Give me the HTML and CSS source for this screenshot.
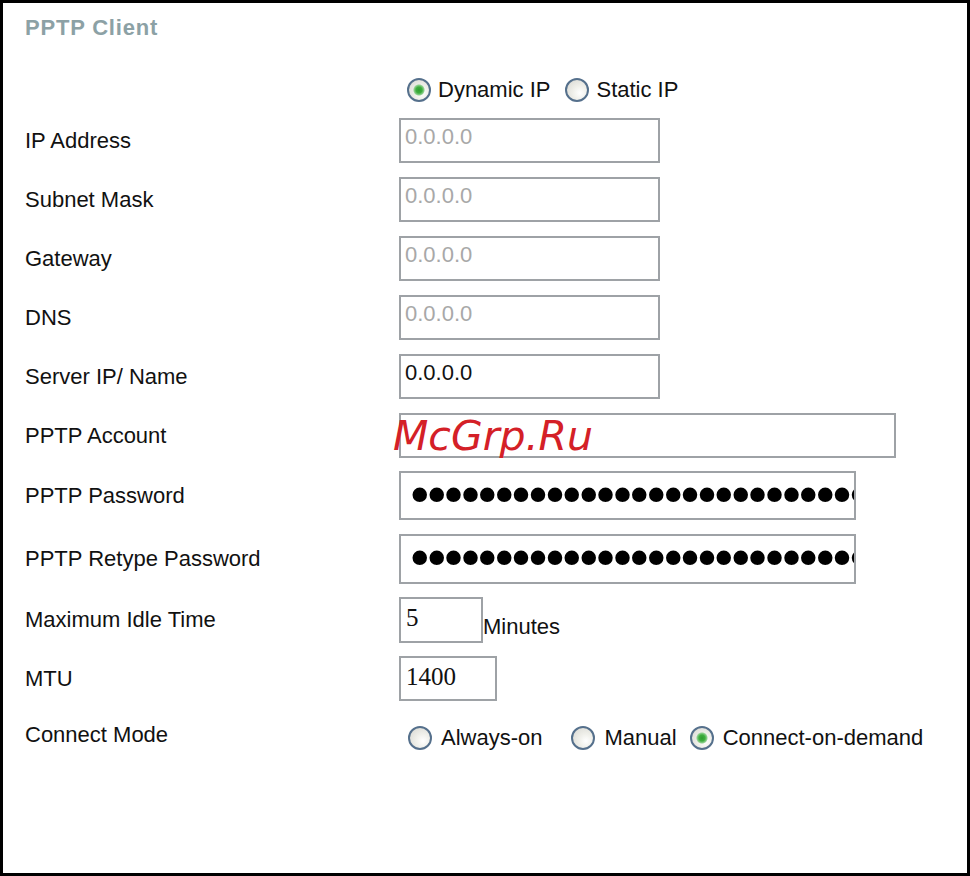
FILE: index.html
```html
<!DOCTYPE html>
<html lang="en">
<head>
<meta charset="utf-8">
<title>PPTP Client</title>
<link rel="stylesheet" href="styles.css">
</head>
<body>
<div class="frame">
  <h1 class="title">PPTP Client</h1>

  <div class="row row-top">
    <div class="label"></div>
    <div class="radios radios-ip">
      <label class="opt"><input type="radio" name="iptype" checked><span>Dynamic IP</span></label>
      <label class="opt"><input type="radio" name="iptype"><span>Static IP</span></label>
    </div>
  </div>

  <div class="row row-ip">
    <div class="label">IP Address</div>
    <input class="field w-ip" type="text" value="0.0.0.0" disabled>
  </div>
  <div class="row">
    <div class="label">Subnet Mask</div>
    <input class="field w-ip" type="text" value="0.0.0.0" disabled>
  </div>
  <div class="row">
    <div class="label">Gateway</div>
    <input class="field w-ip" type="text" value="0.0.0.0" disabled>
  </div>
  <div class="row">
    <div class="label">DNS</div>
    <input class="field w-ip" type="text" value="0.0.0.0" disabled>
  </div>
  <div class="row">
    <div class="label">Server IP/ Name</div>
    <input class="field w-ip" type="text" value="0.0.0.0">
  </div>
  <div class="row">
    <div class="label">PPTP Account</div>
    <input class="field w-account" type="text" value="">
  </div>
  <div class="row row-pass">
    <div class="label">PPTP Password</div>
    <input class="field pass" type="password" value="passwordpasswordpasswordpasswordpassword">
  </div>
  <div class="row row-retype">
    <div class="label">PPTP Retype Password</div>
    <input class="field pass pass2" type="password" value="passwordpasswordpasswordpasswordpassword">
  </div>
  <div class="row row-idle">
    <div class="label">Maximum Idle Time</div>
    <input class="field serif w-idle" type="text" value="5">
    <span class="unit">Minutes</span>
  </div>
  <div class="row row-mtu">
    <div class="label">MTU</div>
    <input class="field serif w-mtu" type="text" value="1400">
  </div>
  <div class="row row-mode">
    <div class="label label-mode">Connect Mode</div>
    <div class="radios radios-mode">
      <label class="opt opt-always"><input type="radio" name="mode"><span>Always-on</span></label>
      <label class="opt opt-manual"><input type="radio" name="mode"><span>Manual</span></label>
      <label class="opt"><input type="radio" name="mode" checked><span>Connect-on-demand</span></label>
    </div>
  </div>

  <div class="watermark">McGrp.Ru</div>
</div>
</body>
</html>
```

FILE: styles.css
```css
html, body {
  margin: 0;
  padding: 0;
  background: #fff;
}

.frame {
  position: relative;
  width: 970px;
  height: 876px;
  box-sizing: border-box;
  border: 3px solid #000;
  padding: 12px 0 0 22px;
  font-family: "Liberation Sans", Arial, sans-serif;
  font-size: 22px;
  line-height: 26px;
  color: #111;
  background: #fff;
}

.title {
  margin: 0;
  font-size: 22px;
  line-height: 26px;
  font-weight: bold;
  letter-spacing: 0.8px;
  color: #8ca1a5;
}

.row {
  display: flex;
  align-items: center;
  margin-top: 14px;
}

.label {
  width: 374px;
  flex: none;
  white-space: nowrap;
}

.row-top { margin-top: 34px; height: 30px; }
.row-ip { margin-top: 13px; }
.row-pass { margin-top: 13px; }
.row-retype { margin-top: 14px; }
.row-idle { margin-top: 13px; align-items: flex-end; }
.row-idle .label { align-self: center; }
.row-mtu { margin-top: 13px; }
.row-mode { margin-top: 22px; height: 30px; }
.label-mode { margin-top: -6px; }

.radios {
  display: flex;
  align-items: center;
  padding-left: 8px;
}

.radios-ip { gap: 15px; padding-left: 8px; }
.radios-ip .opt { gap: 7px; }

.opt {
  display: flex;
  align-items: center;
  gap: 8px;
  white-space: nowrap;
}

.radios-mode { padding-left: 9px; }
.radios-mode .opt { gap: 9px; }
.opt-always { margin-right: 29px; }
.opt-manual { margin-right: 13px; }

.opt input {
  -webkit-appearance: none;
  appearance: none;
  margin: 0;
  width: 24px;
  height: 24px;
  box-sizing: border-box;
  border-radius: 50%;
  border: 2px solid #55708c;
  background: radial-gradient(circle at 65% 65%, #ffffff 0, #f1f1ec 35%, #d6d6d0 100%);
  flex: none;
}

.opt input:checked {
  background:
    radial-gradient(circle at 50% 50%, #2f9d2f 0, #3fae3f 3px, #8fd08f 5px, rgba(255,255,255,0) 6px),
    radial-gradient(circle at 65% 65%, #ffffff 0, #f1f1ec 35%, #d6d6d0 100%);
}

.field {
  box-sizing: border-box;
  height: 45px;
  margin: 0;
  border: 2px solid #9ea2a6;
  border-radius: 0;
  background: #fff;
  padding: 0 4px 8px;
  font-family: "Liberation Sans", Arial, sans-serif;
  font-size: 22px;
  color: #111;
  outline: none;
  flex: none;
}

.field:disabled {
  color: #a8a8a8;
  -webkit-text-fill-color: #a8a8a8;
  background: #fff;
  opacity: 1;
}

.w-ip { width: 261px; }
.w-account { width: 497px; }

.pass {
  width: 457px;
  height: 49px;
  padding: 0 0 0 4px;
  font-family: "DejaVu Sans", sans-serif;
  font-size: 50px;
  letter-spacing: -12.6px;
  color: #000;
}
.pass2 { height: 50px; }

.serif {
  font-family: "Liberation Serif", "Times New Roman", serif;
  font-size: 25px;
  padding: 0 5px 4px;
}

.w-idle { width: 84px; height: 46px; }
.w-mtu { width: 98px; }

.unit {
  margin-bottom: 3px;
}

.watermark {
  position: absolute;
  left: 390px;
  top: 413px;
  font-family: "DejaVu Sans", sans-serif;
  font-style: italic;
  font-size: 41px;
  line-height: 40px;
  color: #d42027;
  white-space: nowrap;
}
```
